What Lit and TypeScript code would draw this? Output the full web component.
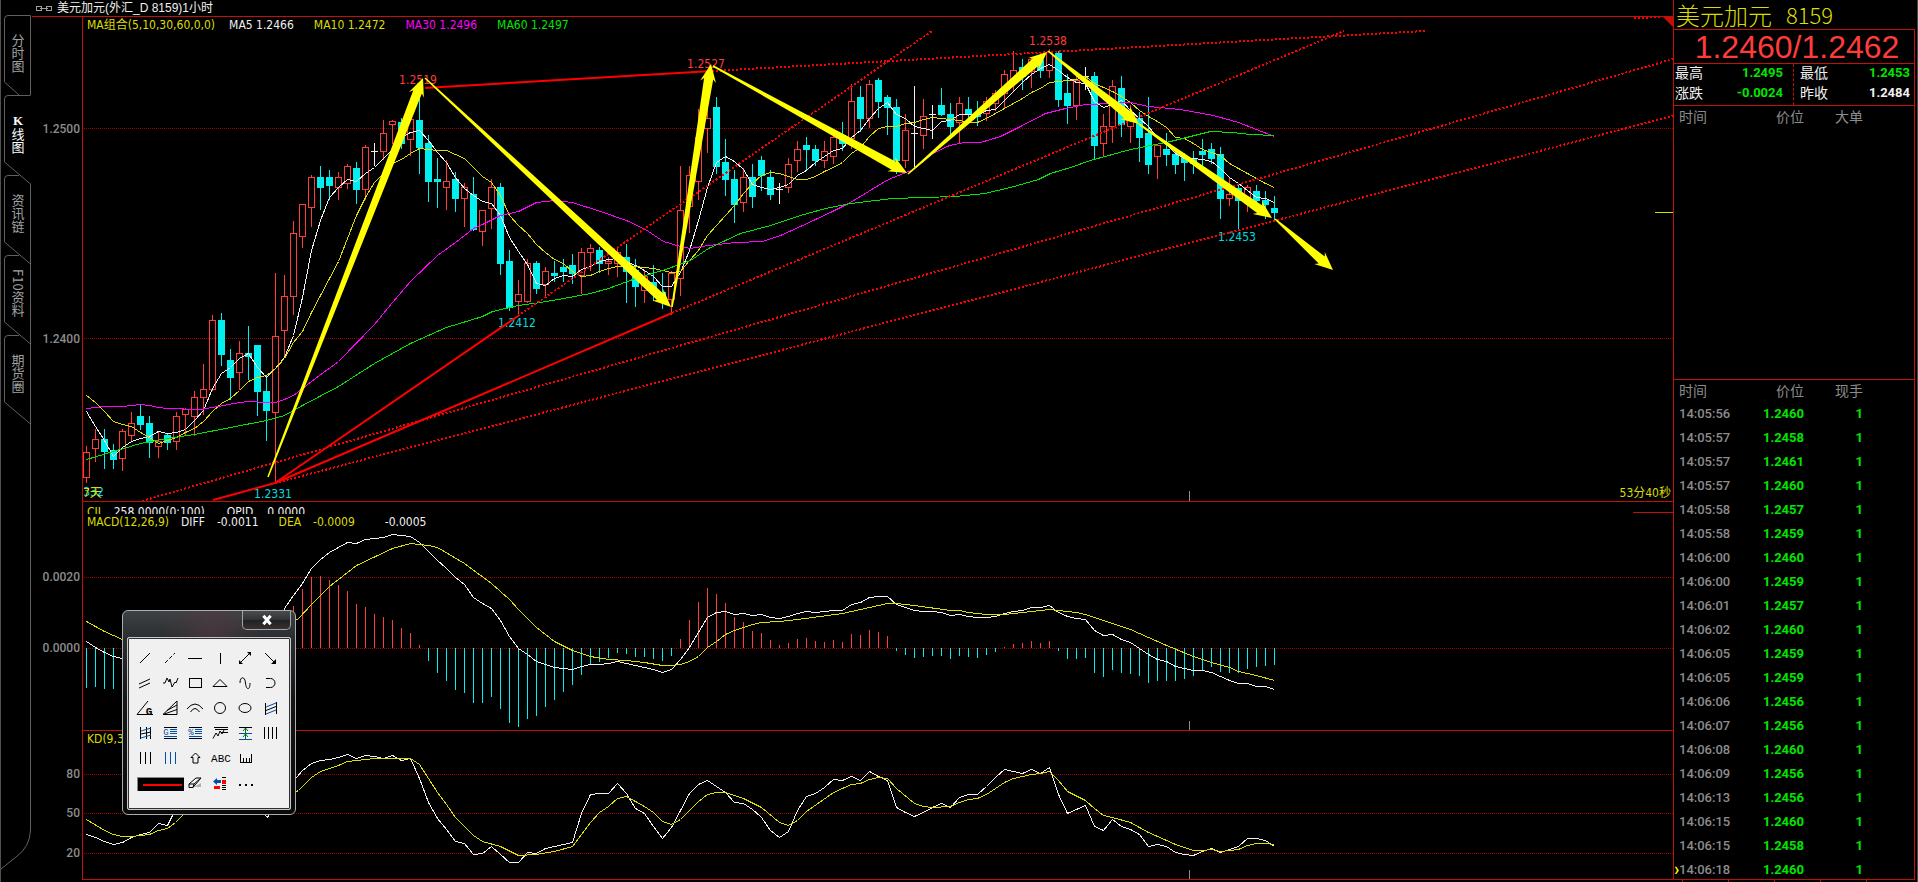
import { css, html, LitElement, svg, type SVGTemplateResult } from "lit";
import { customElement, property } from "lit/decorators.js";
import { classMap } from "lit/directives/class-map.js";

/** Horizontal distance between two bars */
const BAR_STEP = 9;
/** Centre of the first bar, measured from the plot's left edge */
const FIRST_BAR = 3;
/** Plot coordinates start to the right of the price axis */
const PLOT_X = 83;

type Point = [number, number];

// Each bar: kind (r = rising, c = falling, w = unchanged), high, body top, body bottom, low
const CANDLES = `
r446 452 477 482|r429 439 448 461|c429 439 451 468|c444 450 459 468|r429 431 458 470|r412 423 435 441|
c405 416 424 429|c416 423 442 457|r431 441 446 457|c433 435 442 449|r412 416 441 449|r408 409 414 435|
r391 397 416 435|r364 389 397 414|r315 320 389 390|c313 320 354 365|c349 360 377 399|r341 353 372 389|
c326 353 356 379|c345 345 391 415|c375 391 410 440|r273 336 412 482|r275 296 330 356|r221 233 296 314|
r204 204 236 247|r175 177 207 226|c166 177 187 209|c170 177 185 199|r172 177 187 199|r164 166 183 188|
c162 168 189 203|r145 147 189 199|w143 151 151 165|r120 133 151 159|r120 121 124 143|c118 122 143 148|
r118 119 139 155|c95 120 147 173|c135 143 181 201|c158 179 181 207|r160 181 187 209|c172 179 198 211|
r183 187 198 226|c177 194 229 230|r210 210 231 245|r179 187 208 228|c183 187 263 274|c250 261 307 310|
r280 294 301 314|r259 263 301 302|c261 263 288 293|r267 271 284 295|c261 273 275 281|c259 267 271 281|
c254 265 273 283|r248 252 275 293|r244 248 252 270|c247 250 263 272|r257 261 263 274|r248 252 263 276|
c244 257 271 302|c259 270 286 306|r270 276 290 302|c265 282 293 300|c273 292 300 308|r271 273 299 314|
r166 210 278 295|r166 175 206 232|r109 137 181 199|r103 118 128 152|c97 107 166 173|c139 162 179 195|
c170 179 204 222|r168 177 202 211|c164 177 196 207|c156 160 175 190|c170 177 194 199|w183 189 189 203|
r158 164 187 192|r141 149 160 171|c137 145 149 170|c145 149 160 165|r141 151 160 167|r130 137 156 163|
c122 135 143 150|r84 101 138 148|c86 97 118 131|r80 84 118 127|c78 80 101 117|c95 97 107 134|
c99 107 160 173|r114 130 160 167|w86 133 133 166|r99 116 135 148|w105 114 114 138|c88 105 114 115|
c103 114 126 135|r97 103 122 142|c97 109 113 122|c101 113 116 125|r97 101 113 120|r90 93 103 110|
r70 74 93 107|r51 70 83 90|c59 67 76 89|r57 59 71 87|c53 60 70 77|r49 52 70 77|
c51 53 99 106|c74 93 105 123|r75 80 105 119|w67 76 76 89|c72 76 145 159|r114 126 143 156|
r80 86 126 142|c76 88 124 136|r105 117 126 142|c112 118 137 161|c97 133 164 173|r145 145 156 178|
c133 149 154 165|c150 154 164 173|c153 157 162 180|c151 158 163 173|c139 151 154 165|c143 149 158 163|
c147 154 198 218|r177 194 198 205|c185 188 200 228|r185 187 198 211|c185 191 200 207|c191 200 204 218|
c196 208 212 220`;

const MA5 = [
  411, 426, 440, 456, 447, 441, 438, 436, 431, 433, 432, 429, 420, 410, 388, 373,
  367, 358, 353, 367, 377, 368, 357, 335, 297, 250, 220, 197, 187, 179, 181, 173,
  167, 158, 149, 137, 132, 130, 140, 152, 162, 177, 188, 195, 201, 203, 215, 237,
  251, 264, 283, 285, 278, 275, 276, 269, 266, 261, 259, 258, 261, 265, 270, 276,
  286, 286, 272, 250, 220, 187, 162, 156, 161, 169, 184, 187, 189, 187, 184, 175,
  170, 162, 156, 150, 148, 137, 130, 118, 108, 102, 114, 118, 126, 128, 130, 121,
  120, 114, 114, 115, 110, 109, 100, 91, 82, 74, 68, 64, 70, 77, 82, 83, 101, 107,
  104, 100, 110, 118, 126, 137, 144, 153, 158, 158, 159, 161, 168, 177, 183, 190,
  197, 198, 202,
];

const MA10 = [
  395, 402, 411, 421, 424, 426, 432, 437, 443, 440, 437, 432, 428, 421, 411, 403,
  398, 390, 381, 377, 375, 368, 358, 342, 331, 312, 295, 278, 261, 238, 215, 197,
  182, 173, 163, 159, 153, 148, 149, 150, 150, 154, 158, 167, 176, 182, 195, 215,
  225, 233, 244, 252, 259, 263, 271, 276, 275, 271, 268, 266, 265, 266, 267, 268,
  270, 272, 271, 260, 250, 235, 225, 215, 205, 193, 183, 175, 172, 173, 176, 179,
  179, 176, 171, 167, 162, 153, 147, 136, 128, 126, 126, 123, 122, 119, 117, 118,
  119, 120, 122, 122, 118, 113, 108, 103, 98, 92, 88, 82, 81, 80, 79, 76, 83, 87,
  91, 96, 102, 110, 116, 121, 127, 137, 138, 143, 149, 152, 155, 163, 168, 173,
  178, 183, 187,
];

const MA30: Point[] = [
  [86, 408], [104, 406], [122, 406], [140, 404], [149, 405], [158, 407], [167, 408],
  [200, 409], [212, 407], [239, 402], [248, 401], [266, 402], [275, 402], [284, 399],
  [293, 395], [302, 388], [311, 381], [338, 361], [374, 324], [392, 302], [410, 281],
  [437, 255], [455, 242], [473, 228], [482, 224], [500, 215], [518, 211], [536, 202],
  [554, 200], [572, 202], [600, 211], [626, 220], [645, 229], [663, 241], [680, 246],
  [690, 248], [708, 245], [735, 242], [762, 241], [780, 235], [800, 226], [830, 212],
  [850, 202], [868, 191], [888, 179], [913, 169], [932, 153], [949, 145], [964, 142],
  [980, 142], [1000, 136], [1020, 126], [1045, 113], [1065, 108], [1085, 104],
  [1110, 103], [1130, 102], [1148, 106], [1180, 109], [1213, 115], [1238, 122],
  [1256, 129], [1274, 136],
];

const MA60: Point[] = [
  [86, 459], [113, 451], [140, 443], [167, 438], [194, 434], [230, 427], [266, 420],
  [284, 415], [302, 405], [338, 386], [374, 363], [410, 343], [446, 327], [482, 316],
  [492, 311], [518, 305], [540, 302], [563, 298], [590, 293], [608, 288], [635, 278],
  [665, 269], [690, 260], [708, 248], [740, 233], [770, 225], [800, 215], [825, 208],
  [850, 203], [892, 198], [955, 196], [984, 193], [1010, 187], [1038, 179],
  [1050, 173], [1070, 167], [1090, 160], [1130, 149], [1170, 141], [1210, 131],
  [1232, 132], [1250, 134], [1274, 135],
];

const DIFF: Point[] = [
  [86, 641], [95, 647], [104, 652], [113, 656], [122, 658], [131, 659], [230, 659],
  [275, 630], ...series(
    22,
    [
      608, 595, 583, 568, 559, 552, 547, 542, 543, 539, 538, 537, 534, 535, 536, 542,
      551, 560, 568, 577, 584, 597, 603, 608, 620, 636, 648, 654, 661, 664, 667, 668,
      669, 666, 664, 664, 663, 661, 663, 665, 667, 669, 672, 669, 659, 647, 632, 617,
      612, 611, 614, 613, 615, 614, 617, 618, 616, 613, 611, 612, 611, 610, 610, 604,
      602, 597, 596, 596, 604, 607, 610, 611, 611, 612, 615, 614, 616, 617, 617, 616,
      613, 611, 610, 607, 607, 605, 612, 616, 618, 619, 630, 635, 634, 639, 642, 648,
      654, 659, 661, 666, 668, 670, 670, 672, 676, 680, 683, 683, 686, 686, 689,
    ],
  ),
];

const DEA: Point[] = [
  [86, 621], [104, 631], [122, 639], [160, 650], [230, 650], [275, 632], [298, 618],
  [311, 604], [329, 586], [356, 565], [392, 548], [410, 543], [428, 545], [437, 547],
  [464, 563], [491, 583], [509, 599], [518, 609], [527, 618], [536, 627], [554, 641],
  [572, 650], [590, 656], [608, 659], [626, 660], [644, 662], [662, 665], [671, 665],
  [680, 664], [689, 661], [698, 656], [707, 647], [716, 641], [725, 634], [734, 630],
  [752, 624], [761, 622], [779, 621], [797, 619], [842, 613], [860, 609], [878, 605],
  [887, 603], [896, 603], [914, 605], [950, 610], [959, 610], [968, 612], [986, 614],
  [1004, 614], [1022, 612], [1049, 609], [1076, 612], [1085, 614], [1103, 620],
  [1130, 629], [1148, 637], [1166, 645], [1193, 656], [1211, 662], [1229, 667],
  [1238, 671], [1256, 675], [1274, 680],
];

const MACD_ZERO = 648;
const MACD_BARS = [
  688, 687, 689, 689, 686, 684, 682, 680, 676, 672, 668, 664, 660, 657, 655, 652,
  645, 645, 644, 640, 645, 640, 625, 606, 589, 577, 576, 580, 585, 591, 604, 607,
  614, 617, 620, 628, 633, 645, 661, 673, 681, 690, 693, 703, 703, 697, 709, 723,
  727, 719, 716, 707, 700, 692, 685, 675, 665, 662, 658, 653, 654, 657, 657, 659,
  661, 656, 639, 620, 602, 588, 594, 603, 617, 622, 631, 633, 640, 645, 643, 639,
  638, 641, 642, 640, 642, 634, 635, 630, 632, 636, 651, 655, 658, 657, 656, 656,
  659, 656, 657, 658, 655, 652, 647, 644, 643, 641, 643, 641, 651, 659, 659, 658,
  673, 677, 670, 673, 674, 676, 683, 681, 681, 681, 679, 676, 671, 667, 672, 673,
  673, 669, 667, 666, 665,
];

const K_LINE: Point[] = [
  ...series(0, [834, 837, 841, 844, 842, 837, 834, 832, 823, 825]),
  [172, 815], [200, 785], [230, 778], [257, 806], [267, 817], [277, 800],
  ...series(
    24,
    [
      770, 763, 760, 759, 757, 754, 758, 755, 756, 758, 755, 760, 758, 778, 802, 818,
      829, 841, 843, 854, 853, 846, 854, 862, 862, 852, 853, 848, 846, 844, 842, 813,
      794, 793, 793, 783, 793, 808, 813, 826, 838, 827, 810, 793, 784, 780, 786, 792,
      802, 803, 809, 817, 830, 837, 831, 810, 796, 793, 787, 779, 780, 776, 780, 771,
      776, 780, 807, 812, 816, 812, 807, 803, 807, 797, 794, 794, 786, 777, 769, 771,
      773, 769, 773, 767, 794, 813, 809, 805, 826, 830, 819, 826, 829, 834, 846, 844,
      846, 852, 854, 855, 851, 848, 852, 849, 846, 838, 838, 840, 846,
    ],
  ),
];

const D_LINE: Point[] = [
  [86, 819], [104, 830], [113, 834], [122, 836], [131, 836], [140, 835], [149, 834],
  [158, 830], [167, 828], [175, 822], [182, 815], [210, 792], [240, 788], [270, 805],
  [298, 790], [311, 777], [320, 771], [338, 765], [347, 761], [374, 758], [410, 758],
  [419, 764], [428, 778], [437, 792], [446, 804], [455, 817], [473, 835], [482, 841],
  [500, 846], [518, 855], [536, 854], [554, 851], [572, 846], [590, 822], [599, 812],
  [608, 806], [617, 798], [626, 796], [644, 806], [653, 812], [662, 821], [671, 824],
  [680, 819], [689, 810], [698, 801], [707, 794], [716, 792], [725, 792], [734, 795],
  [743, 798], [761, 807], [779, 822], [788, 825], [797, 820], [806, 811], [833, 792],
  [851, 784], [860, 783], [869, 779], [878, 777], [887, 778], [896, 788], [914, 803],
  [923, 806], [932, 807], [950, 806], [959, 802], [968, 799], [977, 798], [986, 794],
  [1004, 782], [1013, 778], [1031, 774], [1040, 773], [1049, 771], [1058, 780],
  [1067, 791], [1085, 800], [1094, 808], [1103, 815], [1112, 817], [1130, 822],
  [1148, 832], [1175, 844], [1193, 850], [1202, 850], [1211, 849], [1220, 851],
  [1229, 850], [1238, 849], [1247, 845], [1256, 843], [1265, 843], [1274, 844],
];

// x1, y1, x2, y2
const TRENDS: [number, number, number, number][] = [
  [425, 88, 712, 71],
  [275, 483, 518, 316],
  [275, 483, 672, 313],
  [213, 500, 275, 483],
];
const PROJECTIONS: [number, number, number, number][] = [
  [712, 71, 1425, 31],
  [1634, 18, 1662, 17],
  [518, 316, 932, 31],
  [672, 313, 1344, 31],
  [275, 483, 1673, 116],
  [142, 501, 1673, 59],
];
const ARROWS: [number, number, number, number][] = [
  [268, 477, 423, 78],
  [425, 78, 671, 307],
  [672, 307, 711, 64],
  [713, 66, 907, 173],
  [908, 174, 1047, 52],
  [1048, 51, 1139, 124],
  [1139, 124, 1272, 218],
  [1275, 219, 1333, 270],
];

const TICKS: [string, string][] = [
  ["14:05:56", "1.2460"], ["14:05:57", "1.2458"], ["14:05:57", "1.2461"],
  ["14:05:57", "1.2460"], ["14:05:58", "1.2457"], ["14:05:58", "1.2459"],
  ["14:06:00", "1.2460"], ["14:06:00", "1.2459"], ["14:06:01", "1.2457"],
  ["14:06:02", "1.2460"], ["14:06:05", "1.2459"], ["14:06:05", "1.2459"],
  ["14:06:06", "1.2456"], ["14:06:07", "1.2456"], ["14:06:08", "1.2460"],
  ["14:06:09", "1.2456"], ["14:06:13", "1.2456"], ["14:06:15", "1.2460"],
  ["14:06:15", "1.2458"], ["14:06:18", "1.2460"],
];

function barX(i: number) {
  return PLOT_X + FIRST_BAR + i * BAR_STEP;
}

function series(start: number, values: number[]): Point[] {
  return values.map((y, i) => [barX(start + i), y]);
}

function polyline(points: Point[], name: string) {
  const d = points.map(([x, y]) => `${x + 0.5},${y + 0.5}`).join(" ");
  return svg`<polyline class="curve ${name}" points=${d} />`;
}

function candle(text: string, i: number) {
  const [high, top, bottom, low] = text.slice(1).split(" ").map(Number);
  const x = barX(i);
  const mid = x + 0.5;
  if (text[0] === "r") {
    return svg`<path class="rise" d="M${mid} ${high}V${top}M${mid} ${bottom}V${low + 1}M${x - 2.5} ${top + 0.5}h6V${Math.max(bottom, top + 1) + 0.5}h-6z" />`;
  }
  if (text[0] === "c") {
    return svg`<path class="fall" d="M${mid} ${high}V${low + 1}" /><rect class="fall-body" x=${x - 3} y=${top} width="7" height=${bottom - top + 1} />`;
  }
  return svg`<path class="flat" d="M${mid} ${high}V${low + 1}M${x - 3} ${top + 0.5}h7" />`;
}

/** Arrow whose shaft widens from a point to the neck of its head */
function arrow([x1, y1, x2, y2]: [number, number, number, number]) {
  const len = Math.hypot(x2 - x1, y2 - y1);
  const ux = (x2 - x1) / len;
  const uy = (y2 - y1) / len;
  const at = (back: number, side: number) =>
    `${(x2 - ux * back - uy * side).toFixed(1)},${(y2 - uy * back + ux * side).toFixed(1)}`;
  const points = [
    at(len, 0.8), at(15, 4.6), at(18, 8), at(0, 0), at(18, -8), at(15, -4.6), at(len, -0.8),
  ];
  return svg`<polygon class="arrow" points=${points.join(" ")} />`;
}

@customElement("chart-pane")
export class ChartPane extends LitElement {
  static styles = css`
    :host {
      display: grid;
      grid-template-columns: 50px minmax(0, 1fr);
      font-family: "DejaVu Sans Condensed", "Noto Sans CJK SC", sans-serif;
      font-size: 12px;
    }

    svg {
      display: block;
      width: 100%;
      overflow: hidden;
    }

    .axis text {
      fill: #8c8c8c;
      font: 500 12px Roboto, "Liberation Sans", sans-serif;
      text-anchor: end;
    }

    .plot {
      position: relative;
      border-left: 1px solid #c01008;
      min-width: 0;
    }

    .ruled {
      border-top: 1px solid #c01008;
    }

    .grid,
    .curve,
    .rise,
    .fall,
    .flat,
    .projection,
    .date {
      fill: none;
      shape-rendering: crispEdges;
    }

    .grid {
      stroke: #a00000;
      stroke-dasharray: 1 1;
    }

    .white,
    .flat {
      stroke: #f0f0f0;
    }

    .yellow {
      stroke: #e0e000;
    }

    .magenta {
      stroke: #f0f;
    }

    .green {
      stroke: #00e600;
    }

    .rise {
      stroke: #ff3c3c;
    }

    .fall {
      stroke: #00f0f0;
    }

    .fall-body {
      fill: #00f0f0;
      shape-rendering: crispEdges;
    }

    .trend {
      stroke: #f00;
      stroke-width: 2;
    }

    .projection {
      stroke: #f00;
      stroke-width: 2;
      stroke-dasharray: 2 2;
    }

    .date {
      stroke: #8c8c8c;
    }

    .arrow {
      fill: #ff0;
    }

    .note {
      text-anchor: middle;
      fill: #00dcdc;
    }

    .peak {
      fill: #ff3c3c;
    }

    .days {
      fill: #dcdc00;
    }
  `;

  /** Screen row at which the pane's drawing area begins */
  @property({ type: Number })
  top = 0;

  @property({ type: Number })
  height = 0;

  @property({ type: Boolean })
  ruled = false;

  @property({ attribute: false })
  scale: [string, number][] = [];

  @property({ attribute: false })
  drawing: SVGTemplateResult | SVGTemplateResult[] = [];

  render() {
    const ruled = classMap({ plot: true, ruled: this.ruled });
    return html`
      <svg class="axis" height=${this.height} aria-hidden="true">
        ${this.scale.map(
          ([label, y]) =>
            svg`<text x="48" y=${y - this.top + 5}>${label}</text>`,
        )}
      </svg>
      <div class=${ruled}>
        <svg height=${this.height} role="img" aria-label="chart">
          ${this.scale.map(([, y]) => {
            const row = y - this.top + 0.5;
            return svg`<line class="grid" x1="1" x2="100%" y1=${row} y2=${row} />`;
          })}
          <g transform="translate(${-PLOT_X} ${-this.top})">${this.drawing}</g>
        </svg>
        <slot></slot>
      </div>
    `;
  }
}

// Drawn on a 25 x 25 cell with the origin in its centre
const TOOLS: { name: string; icon: SVGTemplateResult }[] = [
  { name: "直线", icon: svg`<path d="M-5 5L5 -5" />` },
  { name: "线段", icon: svg`<path d="M-5 5L5 -5" stroke-dasharray="4 2" />` },
  { name: "水平线", icon: svg`<path class="crisp" d="M-7 .5H7" />` },
  { name: "垂直线", icon: svg`<path class="crisp" d="M.5 -5V6" />` },
  {
    name: "双箭头",
    icon: svg`<path d="M-5 5L5 -5" /><path class="solid" d="M-6 6v-4l4 4zM6 -6v4l-4 -4z" />`,
  },
  { name: "箭头", icon: svg`<path d="M-5 -5L5 5" /><path class="solid" d="M6 6v-5l-5 5z" />` },
  { name: "平行线", icon: svg`<path d="M-6 1L5 -4M-6 5L5 0" />` },
  { name: "波浪线", icon: svg`<path d="M-7 0h2l2 -5l2 4l1 -3l2 8l3 -5l1 1l2 -5" />` },
  { name: "矩形", icon: svg`<path class="crisp" d="M-5.5 -4.5h12v9h-12z" />` },
  { name: "三角形", icon: svg`<path d="M-7 3.5L0 -3.5L7 3.5z" />` },
  { name: "正弦线", icon: svg`<path d="M-5 0C-5 -7 0 -7 .5 0C1 7 5 8 5 0" />` },
  { name: "圆弧", icon: svg`<path d="M-4 -4.5h4.500a4.500 4.500 0 0 1 0 9h-4.500" />` },
  {
    name: "江恩角度线",
    icon: svg`<path d="M3 -7L-8 6.500H8" /><text x="4" y="6.500" class="g">G</text>`,
  },
  { name: "阻速线", icon: svg`<path d="M-7 6.500L7 -7V6.500zM-7 6.500L7 1.500M-3 2.500L7 -3" />` },
  { name: "弧线", icon: svg`<path d="M-8 1Q0 -9 8 1M-4.500 4Q0 -3 4.500 4" />` },
  { name: "圆", icon: svg`<circle r="5.500" />` },
  { name: "椭圆", icon: svg`<ellipse rx="6" ry="4.500" />` },
  {
    name: "通道线",
    icon: svg`<path class="crisp" d="M-4.500 -5V7M6.500 -6V6" /><path d="M-4 2.500L6 -1.500" /><path class="blue" d="M-4 -1L6 -5M-4 6L6 2" />`,
  },
  {
    name: "回归通道",
    icon: svg`<path class="crisp" d="M-4.500 -6V6M1.500 -6V6M5.500 -6V6" /><path d="M-4 1L6 -1" /><path class="blue" d="M-4 -2L6 -5M-4 5L6 2" />`,
  },
  {
    name: "黄金分割",
    icon: svg`<path class="crisp" d="M-6 -5.500H7M-6 5.500H7" /><path class="blue crisp" d="M0 -3.500H7M0 -1.500H7M0 .5H7M-6 3.500H7" /><text x="-4" y="2" class="blue-text">G</text>`,
  },
  {
    name: "百分比线",
    icon: svg`<path class="crisp" d="M-6 -5.500H7M-6 5.500H7" /><path class="blue crisp" d="M0 -3.500H7M0 -1.500H7M0 .5H7M-6 3.500H7" /><text x="-4" y="2" class="blue-text">%</text>`,
  },
  {
    name: "波段线",
    icon: svg`<path class="crisp" d="M-6 -5.500H8M-5 -3.500H8M1 -.5H8" /><path d="M-7 5.500L-4 0L-2 3L0 -2L2 1L4 -3" />`,
  },
  {
    name: "对称线",
    icon: svg`<path class="crisp" d="M-6 -5.500H7" /><path class="blue crisp" d="M-6 .5H7M-6 6.500H7" /><path class="green" d="M.5 -5V6M-2 -2L.5 -5L3 -2M-2 4L.5 1L3 4" />`,
  },
  { name: "周期线", icon: svg`<path class="crisp" d="M-5.500 -6V6M-1.500 -6V6M2.500 -6V6M6.500 -6V6" />` },
  { name: "斐波那契", icon: svg`<path class="crisp" d="M-4.500 -6V6M.5 -6V6M5.500 -6V6" />` },
  { name: "时间线", icon: svg`<path class="blue crisp" d="M-4.500 -6V6M.5 -6V6M5.500 -6V6" />` },
  { name: "标记", icon: svg`<path d="M.5 -5L5 -.5H3V5H-2V-.5H-4z" />` },
  { name: "文字", icon: svg`<text x="1" y="4" class="abc">ABC</text>` },
  { name: "量尺", icon: svg`<path class="crisp" d="M-4.500 -4V4.500H6.500V-4M-1.500 0V4M1.500 0V4M4.500 0V4" />` },
];

@customElement("draw-palette")
export class DrawPalette extends LitElement {
  static styles = css`
    :host {
      display: block;
      box-sizing: border-box;
      border: 1px solid #a9aeb0;
      border-radius: 6px;
      background:
        radial-gradient(ellipse at 90px 26px, #5a3a4480, transparent 50px),
        linear-gradient(#3d4143, #2a2d2f 28px, #141516 90px, #0a0a0a);
      padding: 0 4px 4px;
    }

    header {
      display: flex;
      justify-content: flex-end;
      height: 26px;
    }

    button {
      display: grid;
      place-items: center;
      margin: 0;
      border: 0;
      padding: 0;
      background: none;
      color: #000;
    }

    .close {
      box-sizing: border-box;
      width: 49px;
      height: 19px;
      border: 1px solid #a0a4a6;
      border-top: 0;
      border-radius: 0 0 5px 5px;
      background: linear-gradient(#4a4c4e, #303234 50%, #202123 50%, #38302f);
    }

    .body {
      display: grid;
      grid-template-columns: repeat(6, 25px);
      grid-auto-rows: 25px;
      box-sizing: border-box;
      height: 173px;
      border: 1px solid #c8c8c8;
      outline: 1px solid #303030;
      outline-offset: -2px;
      border-radius: 2px;
      padding: 8px 5px;
      background: #f0f0f0;
    }

    .pen {
      grid-column: 1 / span 2;
      justify-self: start;
      align-self: center;
      margin-left: 4px;
      box-sizing: border-box;
      width: 47px;
      height: 14px;
      border: 1px solid #888;
      border-width: 1px 0 0 1px;
      background: #000;
    }

    svg {
      display: block;
      fill: none;
      stroke: #000;
    }

    .crisp {
      shape-rendering: crispEdges;
    }

    .solid {
      fill: #000;
      stroke: none;
    }

    .blue {
      stroke: #0050a8;
    }

    .green {
      stroke: #006e1e;
    }

    text {
      stroke: none;
      fill: #000;
      text-anchor: middle;
      font-family: "Liberation Mono", monospace;
      font-size: 11px;
    }

    .g {
      font-weight: 700;
    }

    .blue-text {
      fill: #0050a8;
      font-size: 9px;
    }
  `;

  private cell(content: SVGTemplateResult) {
    return html`<svg width="25" height="25" viewBox="-12 -12 25 25">
      ${content}
    </svg>`;
  }

  render() {
    return html`
      <header>
        <button class="close" aria-label="关闭">
          <svg width="12" height="12" viewBox="0 0 10 10">
            <path d="M2 1.500L8 8.500M8 1.500L2 8.500" stroke="#fff" stroke-width="2.500" />
          </svg>
        </button>
      </header>
      <div class="body">
        ${TOOLS.map(
          ({ name, icon }) =>
            html`<button aria-label=${name}>${this.cell(icon)}</button>`,
        )}
        <span></span>
        <button class="pen" aria-label="线型">
          <svg width="46" height="13" viewBox="0 0 46 13">
            <path class="crisp" d="M5 7H44" stroke="#f00" stroke-width="2" />
          </svg>
        </button>
        <button aria-label="橡皮">
          ${this.cell(svg`
            <path d="M-1 4h7v-4z" fill="#b0b0b0" stroke="none" />
            <path d="M-6 1L1 -5H6L0 2L-2 4.500H-6zM-6 1H-1L6 -5M-1 1L-2 4.500" />
          `)}
        </button>
        <button aria-label="转换">
          ${this.cell(svg`
            <path d="M-7 -1.500L-3 -5V-3H1V0H-3V2z" fill="#0050a8" stroke="none" />
            <path class="crisp" d="M2 -3h4v4h-4zM-6 3h6v3h-6z" fill="#f00" stroke="none" />
            <path class="crisp" d="M2 -5.500h4M2 2.500h4M2 4.500h4M2 6.500h4" />
          `)}
        </button>
        <button aria-label="更多">
          ${this.cell(svg`<path class="solid" d="M-6 1h2v2h-2zM0 1h2v2h-2zM6 1h2v2h-2z" />`)}
        </button>
      </div>
    `;
  }
}

@customElement("quote-panel")
export class QuotePanel extends LitElement {
  static styles = css`
    :host {
      display: flex;
      flex-direction: column;
      box-sizing: border-box;
      border-right: 1px solid #484848;
      padding-right: 2px;
      min-height: 0;
      overflow: hidden;
      font-family: "Noto Sans CJK SC", sans-serif;
      font-size: 14px;
    }

    h1 {
      display: flex;
      gap: 14px;
      margin: 0;
      border-left: 1px solid #c01008;
      padding-left: 2px;
      height: 29px;
      color: #dcdc00;
      font-size: 24px;
      font-weight: 300;
      line-height: 29px;
    }

    h1 span {
      font-size: 22px;
    }

    section {
      border: 1px solid #c01008;
      border-bottom: 0;
    }

    .price {
      height: 33px;
      padding-left: 6px;
      color: #ff3c3c;
      font: 32px/34px "Liberation Sans", sans-serif;
      text-align: center;
    }

    .stats {
      display: grid;
      grid-template-columns: 1fr 1fr;
      height: 41px;
    }

    dl {
      display: grid;
      grid-template-columns: auto 1fr;
      grid-auto-rows: 20px;
      margin: 0;
      padding: 0 4px 0 1px;
      line-height: 17px;
      color: #f0f0f0;
    }

    dl:first-child {
      border-right: 1px dashed #c01008;
      padding-right: 10px;
    }

    dl:last-child {
      padding-left: 6px;
    }

    dd {
      margin: 0;
      text-align: right;
    }

    dd,
    td {
      font-family: Roboto, "Liberation Sans", sans-serif;
      font-size: 13px;
      font-weight: 700;
    }

    .down {
      color: #00e600;
    }

    .large {
      height: 273px;
    }

    .ticks {
      flex: 1;
      min-height: 0;
      overflow: hidden;
      border-bottom: 1px solid #c01008;
    }

    table {
      width: 100%;
      border-collapse: collapse;
      table-layout: fixed;
      color: #8c8c8c;
    }

    th {
      padding: 0;
      height: 21px;
      font-weight: 400;
      line-height: 21px;
      text-align: right;
    }

    td {
      padding: 0;
      height: 24px;
      text-align: right;
    }

    th:first-child,
    td:first-child {
      width: 67px;
      padding-left: 5px;
      text-align: left;
    }

    td:first-child {
      position: relative;
      font-weight: 500;
    }

    th:nth-child(2),
    td:nth-child(2) {
      width: 58px;
    }

    th:nth-child(3),
    td:nth-child(3) {
      padding-right: 51px;
    }

    .last::before {
      position: absolute;
      left: 0;
      content: "›";
      color: #ff0;
      font-size: 18px;
      line-height: 13px;
    }

    .tabs {
      display: flex;
      height: 2px;
    }

    .tabs i {
      width: 45px;
      border-right: 1px solid #c01008;
    }

    .tabs i:first-child {
      width: 9px;
    }
  `;

  private head(last: string) {
    return html`<thead>
      <tr>
        <th>时间</th>
        <th>价位</th>
        <th>${last}</th>
      </tr>
    </thead>`;
  }

  render() {
    return html`
      <h1>美元加元 <span>8159</span></h1>
      <section class="price">1.2460/1.2462</section>
      <section class="stats">
        <dl>
          <dt>最高</dt>
          <dd class="down">1.2495</dd>
          <dt>涨跌</dt>
          <dd class="down">-0.0024</dd>
        </dl>
        <dl>
          <dt>最低</dt>
          <dd class="down">1.2453</dd>
          <dt>昨收</dt>
          <dd>1.2484</dd>
        </dl>
      </section>
      <section class="large">
        <table>
          ${this.head("大单")}
        </table>
      </section>
      <section class="ticks">
        <table>
          ${this.head("现手")}
          <tbody>
            ${TICKS.map(
              ([time, price], i) => html`<tr>
                <td class=${classMap({ last: i === TICKS.length - 1 })}>${time}</td>
                <td class="down">${price}</td>
                <td class="down">1</td>
              </tr>`,
            )}
          </tbody>
        </table>
      </section>
      <div class="tabs"><i></i><i></i><i></i><i></i><i></i></div>
    `;
  }
}

@customElement("app-root")
export class AppRoot extends LitElement {
  static styles = css`
    :host {
      display: grid;
      grid-template-columns: 32px minmax(0, 1fr) 245px;
      position: relative;
      height: 100vh;
      overflow: hidden;
      background: #000;
      color: #f0f0f0;
      font-family: "DejaVu Sans Condensed", "Noto Sans CJK SC", sans-serif;
      font-size: 12px;
    }

    nav {
      display: flex;
      flex-direction: column;
      box-sizing: border-box;
      border-left: 1px solid #505050;
      padding: 15px 0 0 3px;
      min-height: 0;
    }

    nav button {
      position: relative;
      flex: none;
      margin: 0;
      border: 0;
      padding: 0 0 4px;
      width: 27px;
      height: 80px;
      background: none;
      color: #a0a0a0;
      font: 13px/14px "Noto Sans CJK SC", sans-serif;
      writing-mode: vertical-rl;
      text-align: center;
    }

    nav button.active {
      color: #fff;
    }

    nav b {
      font-family: "Liberation Serif", serif;
      text-orientation: upright;
    }

    nav svg {
      position: absolute;
      left: 0;
      top: 0;
      overflow: visible;
      fill: none;
      stroke: #606060;
    }

    .tail {
      flex: 1;
      min-height: 0;
    }

    .tail svg {
      position: static;
      display: block;
    }

    .caption {
      display: flex;
      align-items: center;
      gap: 4px;
      height: 16px;
      padding-left: 4px;
      border-bottom: 1px solid #c01008;
      font-family: "Liberation Sans", "Noto Sans CJK SC", sans-serif;
      line-height: 14px;
    }

    .caption svg {
      fill: none;
      stroke: #a0a0a0;
      shape-rendering: crispEdges;
    }

    main {
      position: relative;
      min-width: 0;
    }

    .legend {
      position: absolute;
      left: 4px;
      top: 0;
      display: flex;
      line-height: 16px;
      white-space: pre;
    }

    .averages {
      gap: 20px;
    }

    .averages span:first-child {
      margin-right: -6px;
    }

    .stack {
      position: absolute;
      left: 4px;
      top: 3px;
    }

    .row {
      display: flex;
      line-height: 16px;
      white-space: pre;
    }

    .cut {
      gap: 10px;
      height: 9px;
      line-height: 14px;
      overflow: hidden;
    }

    .cut span:nth-child(2) {
      margin-right: 12px;
    }

    .cut span:nth-child(3) {
      margin-right: 4px;
    }

    .macd {
      gap: 12px;
    }

    .macd span:nth-child(3) {
      margin-right: 8px;
    }

    .macd span:nth-child(6) {
      margin-left: 18px;
    }

    .yellow {
      color: #dcdc00;
    }

    .magenta {
      color: #f0f;
    }

    .green {
      color: #00e600;
    }

    .corner {
      position: absolute;
      right: 0;
      top: 0;
      width: 10px;
      height: 10px;
      background: #c01008;
      clip-path: polygon(0 0, 100% 0, 100% 100%);
    }

    .last-price {
      position: absolute;
      right: 0;
      top: 195px;
      width: 18px;
      height: 1px;
      background: #dcdc00;
    }

    .countdown {
      position: absolute;
      right: 2px;
      bottom: 0;
      line-height: 16px;
    }

    .mark {
      position: absolute;
      right: 0;
      top: 10px;
      width: 40px;
      height: 1px;
      background: #c01008;
    }

    .base {
      margin-left: 50px;
      border-top: 1px solid #c01008;
    }

    draw-palette {
      position: absolute;
      left: 122px;
      top: 610px;
      width: 174px;
    }
  `;

  private tab(label: unknown, index: number) {
    const active = index === 1;
    // The open tab has no right edge; the ones below it lean over their neighbour
    const right = active
      ? "M4 .5H26"
      : index === 0
        ? "M4 .5H26.500V80.500"
        : "M26.500 9V89";
    const left = `M15 .5H4Q.5 .5 .5 4V67L${index === 0 ? "15 80" : "26.500 89"}`;
    return html`<button class=${classMap({ active })}>
      <svg width="27" height="80" aria-hidden="true">
        <path d=${left} />
        <path d=${right} />
      </svg>
      ${label}
    </button>`;
  }

  private priceDrawing() {
    const bars = CANDLES.replace(/\n/g, "").trim().split("|");
    const line = (name: string) => ([x1, y1, x2, y2]: number[]) =>
      svg`<line class=${name} x1=${x1} y1=${y1} x2=${x2} y2=${y2} />`;
    return svg`
      ${bars.map(candle)}
      ${polyline(series(0, MA5), "white")}
      ${polyline(series(0, MA10), "yellow")}
      ${polyline(MA30, "magenta")}
      ${polyline(MA60, "green")}
      <text class="note peak" x="418" y="84">1.2519</text>
      <text class="note peak" x="706" y="68">1.2527</text>
      <text class="note peak" x="1048" y="45">1.2538</text>
      <text class="note" x="517" y="327">1.2412</text>
      <text class="note" x="1237" y="241">1.2453</text>
      <text class="note" x="273" y="498">1.2331</text>
      <text class="note" x="85" y="496">1.2332</text>
      <text class="days" x="83" y="497">7天</text>
      ${TRENDS.map(line("trend"))}
      ${PROJECTIONS.map(line("projection"))}
      ${ARROWS.map(arrow)}
      <path class="date" d="M1189.500 491V501" />
    `;
  }

  private macdDrawing() {
    return svg`
      ${MACD_BARS.map((y, i) => {
        const x = barX(i) + 0.5;
        return svg`<line class=${y > MACD_ZERO ? "fall" : "rise"} x1=${x} x2=${x} y1=${MACD_ZERO} y2=${y} />`;
      })}
      ${polyline(DIFF, "white")}
      ${polyline(DEA, "yellow")}
      <path class="date" d="M1189.500 721V730" />
    `;
  }

  private kdDrawing() {
    return svg`
      ${polyline(K_LINE, "white")}
      ${polyline(D_LINE, "yellow")}
      <path class="date" d="M1189.500 870V879" />
    `;
  }

  render() {
    return html`
      <nav>
        ${["分时图", html`<b>K</b>线图`, "资讯链", "F10资料", "期货圈"].map((label, i) =>
          this.tab(label, i),
        )}
        <div class="tail">
          <svg width="27" height="467">
            <path d="M26.500 9V415Q26 432 12 442L-3 454" />
          </svg>
        </div>
      </nav>
      <main>
        <div class="caption">
          <svg width="17" height="7" aria-hidden="true">
            <path d="M.5 1.500h5v4h-5zM10.500 1.500h5v4h-5zM4 3.500h8" />
          </svg>
          美元加元(外汇_D 8159)1小时
        </div>
        <chart-pane
          .top=${17}
          .height=${484}
          .scale=${[["1.2500", 128], ["1.2400", 338]]}
          .drawing=${this.priceDrawing()}
        >
          <div class="legend averages">
            <span class="yellow">MA组合(5,10,30,60,0,0)</span>
            <span>MA5 1.2466</span>
            <span class="yellow">MA10 1.2472</span>
            <span class="magenta">MA30 1.2496</span>
            <span class="green">MA60 1.2497</span>
          </div>
          <div class="corner"></div>
          <div class="last-price"></div>
          <div class="countdown yellow">53分40秒</div>
        </chart-pane>
        <chart-pane
          ruled
          .top=${502}
          .height=${228}
          .scale=${[["0.0020", 577], ["0.0000", 648]]}
          .drawing=${this.macdDrawing()}
        >
          <div class="stack">
            <div class="row cut">
              <span class="yellow">CJL</span>
              <span>258.0000(0:100)</span>
              <span>OPID</span>
              <span>0.0000</span>
            </div>
            <div class="row macd">
              <span class="yellow">MACD(12,26,9)</span>
              <span>DIFF</span>
              <span>-0.0011</span>
              <span class="yellow">DEA</span>
              <span class="yellow">-0.0009</span>
              <span>-0.0005</span>
            </div>
          </div>
          <div class="mark"></div>
        </chart-pane>
        <chart-pane
          ruled
          .top=${731}
          .height=${148}
          .scale=${[["80", 774], ["50", 813], ["20", 853]]}
          .drawing=${this.kdDrawing()}
        >
          <div class="legend yellow">KD(9,3,3)</div>
        </chart-pane>
        <div class="base"></div>
      </main>
      <quote-panel></quote-panel>
      <draw-palette role="dialog" aria-label="画线工具"></draw-palette>
    `;
  }
}
